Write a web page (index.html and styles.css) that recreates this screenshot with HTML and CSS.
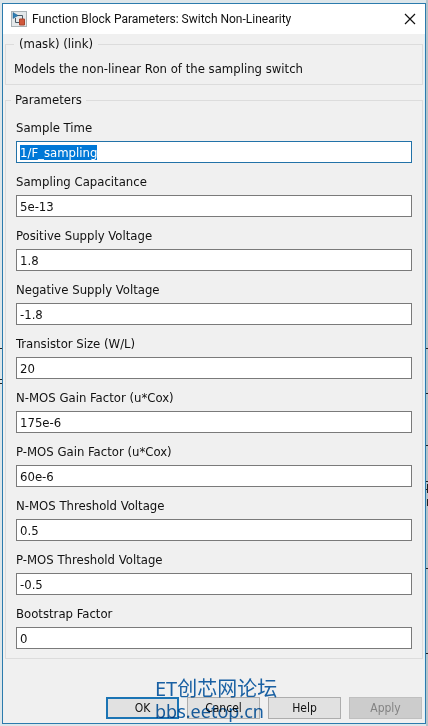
FILE: index.html
```html
<!DOCTYPE html>
<html lang="en">
<head>
    <meta charset="UTF-8">
    <meta name="viewport" content="width=device-width, initial-scale=1.0">
    <title>Function Block Parameters: Switch Non-Linearity</title>
    <link rel="stylesheet" href="styles.css">
</head>
<body>
    <!-- Model lines behind the dialog -->
    <svg class="wires wires-left" width="2" height="726" aria-hidden="true">
        <path d="M0 348.5h2M0 379.5h2M0 383.5h2" stroke="#222"/>
    </svg>
    <svg class="wires wires-right" width="2" height="726" aria-hidden="true">
        <path d="M0 348.5h2M0 393.5h2M0 445.5h2M0 481.5h2M0 489.5h2M0 568.5h2M0 653.5h2M1.5 484v9M1.5 499v7" stroke="#222"/>
    </svg>

    <div class="dialog">
        <div class="title-bar">
            <svg class="app-icon" width="16" height="16" viewBox="0 0 16 16" aria-hidden="true">
                <rect x="0.5" y="0.5" width="15" height="15" fill="#e4e8ea" stroke="#a9b1b5"/>
                <path d="M6 4.500h5.500V8M4.500 7v4.500H8" fill="none" stroke="#4a5a66"/>
                <path d="M2 1.500l5 3-5 3z" fill="#2e7fb5" stroke="#1d5c8a" stroke-width="0.5"/>
                <path d="M8.500 8h5v6h-5z" fill="#d0583c" stroke="#a8452d"/>
            </svg>
            <span class="title">Function Block Parameters: Switch Non-Linearity</span>
            <button type="button" class="close" aria-label="Close">
                <svg width="12" height="12" viewBox="0 0 12 12">
                    <path d="M1 1l10 10M11 1L1 11" stroke="#111" stroke-width="1.200"/>
                </svg>
            </button>
        </div>

        <form class="dialog-body">
            <fieldset class="group mask">
                <legend>(mask) (link)</legend>
                <p>Models the non-linear Ron of the sampling switch</p>
            </fieldset>

            <fieldset class="group parameters">
                <legend>Parameters</legend>
                <div class="field">
                    <label for="sample_time">Sample Time</label>
                    <input type="text" id="sample_time" value="1/F_sampling">
                </div>
                <div class="field">
                    <label for="capacitance">Sampling Capacitance</label>
                    <input type="text" id="capacitance" value="5e-13">
                </div>
                <div class="field">
                    <label for="vdd">Positive Supply Voltage</label>
                    <input type="text" id="vdd" value="1.8">
                </div>
                <div class="field">
                    <label for="vss">Negative Supply Voltage</label>
                    <input type="text" id="vss" value="-1.8">
                </div>
                <div class="field">
                    <label for="size">Transistor Size (W/L)</label>
                    <input type="text" id="size" value="20">
                </div>
                <div class="field">
                    <label for="nmos_gain">N-MOS Gain Factor (u*Cox)</label>
                    <input type="text" id="nmos_gain" value="175e-6">
                </div>
                <div class="field">
                    <label for="pmos_gain">P-MOS Gain Factor (u*Cox)</label>
                    <input type="text" id="pmos_gain" value="60e-6">
                </div>
                <div class="field">
                    <label for="nmos_vth">N-MOS Threshold Voltage</label>
                    <input type="text" id="nmos_vth" value="0.5">
                </div>
                <div class="field">
                    <label for="pmos_vth">P-MOS Threshold Voltage</label>
                    <input type="text" id="pmos_vth" value="-0.5">
                </div>
                <div class="field">
                    <label for="bootstrap">Bootstrap Factor</label>
                    <input type="text" id="bootstrap" value="0">
                </div>
            </fieldset>

            <div class="buttons">
                <button type="button" class="default">OK</button>
                <button type="button">Cancel</button>
                <button type="button">Help</button>
                <button type="button" disabled>Apply</button>
            </div>
        </form>

        <div class="watermark">
            <div class="site-name" lang="zh">ET创芯网论坛</div>
            <div>bbs.eetop.cn</div>
        </div>
    </div>

    <script>
        // The first parameter is selected when the dialog opens
        const first = document.getElementById('sample_time');
        first.focus();
        first.select();
    </script>
</body>
</html>
```
FILE: styles.css
```css
* {
    box-sizing: border-box;
}
body {
    margin: 0;
    padding: 3px 2px 2px;
    background: linear-gradient(to right, #dde6ea calc(100% - 2px), #b4c3ca calc(100% - 2px));
    font-family: "DejaVu Sans Condensed", "DejaVu Sans", Tahoma, sans-serif;
    font-size: 13px;
    line-height: 16px;
    color: #111;
}
.wires {
    position: absolute;
    top: 0;
}
.wires-left {
    left: 0;
}
.wires-right {
    right: 0;
}
.dialog {
    position: relative;
    border: 1px solid #2b7bad;
    background-color: #f0f0f0;
    box-shadow: inset -1px 0 #dff1fa;
}
.title-bar {
    display: flex;
    align-items: center;
    height: 30px;
    padding: 0 9px 0 8px;
    background-color: #fff;
}
.title {
    flex: 1;
    margin-left: 5px;
    font-family: Roboto, "Segoe UI", sans-serif;
    font-size: 12px;
    white-space: nowrap;
}
.close {
    display: flex;
    padding: 0;
    border: none;
    background: none;
}
.dialog-body {
    padding: 2px 2px 4px;
}
.group {
    min-width: 0;
    margin: 0;
    border: 1px solid #dcdcdc;
}
.group p {
    margin: 0;
}
.mask {
    padding: 9px 8px 7px;
}
.mask legend {
    padding: 0 5px;
}
.parameters {
    margin-top: 7px;
    padding: 12px 10px 9px;
}
.parameters legend {
    margin-left: -5px;
    padding: 0 4px;
}
.field {
    display: flex;
    flex-direction: column;
    gap: 5px;
}
.field + .field {
    margin-top: 11px;
}
.field input {
    width: 100%;
    height: 22px;
    padding: 0 3px;
    border: 1px solid #7a7a7a;
    background-color: #fff;
    font: inherit;
    color: inherit;
}
.field input:focus {
    outline: none;
    border-color: #2272a8;
}
.field input::selection {
    background-color: #0078d7;
    color: #fff;
}
.buttons {
    display: flex;
    justify-content: flex-end;
    gap: 8px;
    margin-top: 38px;
    padding-right: 1px;
}
.buttons button {
    width: 73px;
    height: 22px;
    padding: 0;
    border: 1px solid #adadad;
    background-color: #e1e1e1;
    font-family: inherit;
    font-size: 12px;
    color: #111;
}
.buttons .default {
    border: 2px solid #1b74b4;
}
.buttons button:disabled {
    border-color: #bfbfbf;
    background-color: #ccc;
    color: #838383;
}
/* Site mark stamped over the buttons */
.watermark {
    position: absolute;
    left: 152px;
    bottom: 1px;
    font-family: "Noto Sans", "Noto Sans CJK SC", sans-serif;
    font-size: 18px;
    line-height: 22px;
    color: #1a66ad;
    white-space: nowrap;
    pointer-events: none;
    mix-blend-mode: multiply;
}
.site-name {
    font-size: 20px;
}
```
